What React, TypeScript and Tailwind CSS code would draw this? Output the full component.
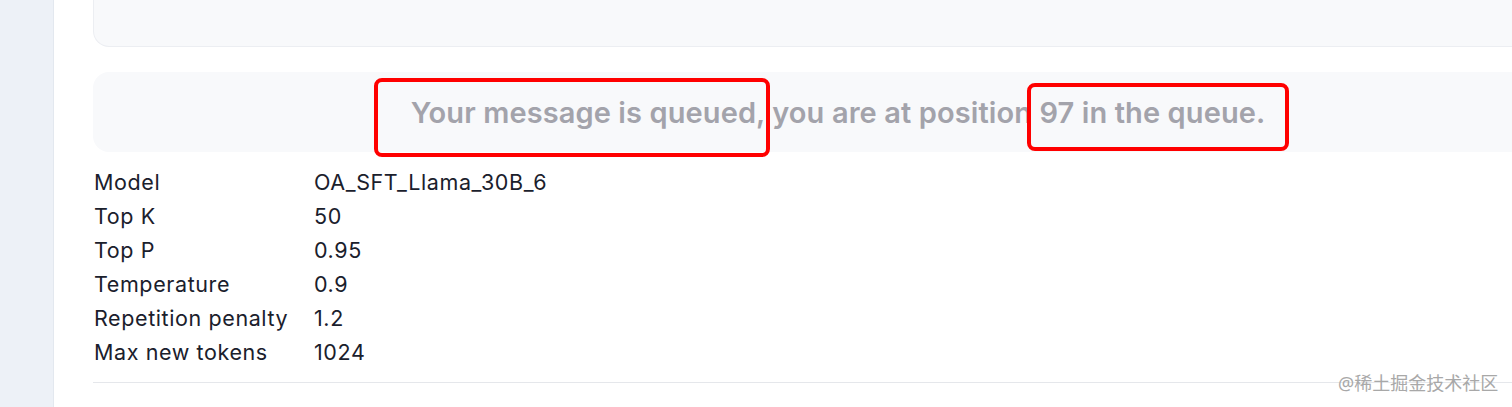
import React from "react";

const rows: [string, string][] = [
  ["Model", "OA_SFT_Llama_30B_6"],
  ["Top K", "50"],
  ["Top P", "0.95"],
  ["Temperature", "0.9"],
  ["Repetition penalty", "1.2"],
  ["Max new tokens", "1024"],
];

export default function App() {
  return (
    <div
      className="relative flex h-[407px] w-full overflow-hidden bg-white"
      style={{ fontFamily: "Inter, 'Noto Sans', sans-serif" }}
    >
      <div className="w-[54px] shrink-0 border-r border-[#e3e8ef] bg-[#edf1f7]" />
      <div className="flex-1 min-w-0 pl-[39px]">
        <div className="flex w-[1490px] flex-col">
          <div className="h-[47px] rounded-b-[16px] border border-t-0 border-[#eceef2] bg-[#f8f9fb]" />
          <div className="mt-[25px] flex h-[80px] items-center justify-center rounded-[16px] bg-[#f8f9fb]">
            <span className="pt-[2px] text-[29px] font-semibold tracking-[0.1px] text-[#a3a3ab]">
              Your message is queued, you are at position 97 in the queue.
            </span>
          </div>
          <div className="mt-[13px] flex flex-col text-[21.5px] leading-[34px] tracking-[0.6px] text-[#1a202c]">
            {rows.map(([k, v]) => (
              <div key={k} className="flex">
                <div className="w-[221px] pl-[1px]">{k}</div>
                <div>{v}</div>
              </div>
            ))}
          </div>
          <div className="mt-[13px] h-px bg-[#e5e7eb]" />
        </div>
      </div>

      <div className="pointer-events-none absolute left-[374px] top-[78px] h-[79px] w-[396px] rounded-[8px] border-[4px] border-[#ff0000]" />
      <div className="pointer-events-none absolute left-[1027px] top-[83px] h-[68px] w-[262px] rounded-[8px] border-[4px] border-[#ff0000]" />

      <div
        className="absolute left-[1338px] top-[371px] text-[18px] leading-[24px] text-[#a8a8a8]"
        style={{ fontFamily: "'Noto Sans', 'Noto Sans CJK SC', sans-serif" }}
      >
        @稀土掘金技术社区
      </div>
    </div>
  );
}
